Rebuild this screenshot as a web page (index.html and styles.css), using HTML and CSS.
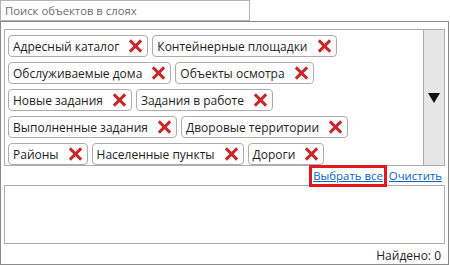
FILE: index.html
```html
<!DOCTYPE html>
<html lang="ru">
<head>
<meta charset="utf-8">
<link rel="stylesheet" href="styles.css">
</head>
<body>
<div class="search">Поиск объектов в слоях</div>
<div class="panel">
  <div class="tagbox">
    <div class="tags">
      <span class="tag">Адресный каталог<span class="x"></span></span>
      <span class="tag">Контейнерные площадки<span class="x"></span></span>
      <span class="tag">Обслуживаемые дома<span class="x"></span></span>
      <span class="tag">Объекты осмотра<span class="x"></span></span>
      <span class="tag">Новые задания<span class="x"></span></span>
      <span class="tag">Задания в работе<span class="x"></span></span>
      <span class="tag">Выполненные задания<span class="x"></span></span>
      <span class="tag">Дворовые территории<span class="x"></span></span>
      <span class="tag">Районы<span class="x"></span></span>
      <span class="tag">Населенные пункты<span class="x"></span></span>
      <span class="tag">Дороги<span class="x"></span></span>
    </div>
    <div class="scroll"><span class="arrow"></span></div>
  </div>
  <div class="links">
    <a class="link marked" href="#">Выбрать все</a><a class="link" href="#">Очистить</a>
  </div>
  <div class="results"></div>
  <div class="found">Найдено: 0</div>
</div>
</body>
</html>
```
FILE: styles.css
```css
* { box-sizing: border-box; }
body {
  margin: 0;
  background: #fff;
  font-family: "Open Sans", "Noto Sans", sans-serif;
  font-size: 12px;
  color: #1e1e1e;
}
.search {
  width: 250px;
  height: 21px;
  border: 1px solid #b4b4b4;
  color: #6d6d6d;
  padding: 1px 4px;
  line-height: 17px;
  font-size: 11.3px;
}
.panel {
  width: 449px;
  height: 244px;
  border: 1px solid #8a8a8a;
  padding: 7px 3px 0 3px;
}
.tagbox {
  display: flex;
  height: 137px;
  border: 1px solid #acacac;
}
.tags {
  flex: 1;
  display: flex;
  flex-wrap: wrap;
  align-content: flex-start;
  gap: 5px 4px;
  padding: 5px 3px 4px;
}
.tag {
  display: inline-flex;
  align-items: center;
  height: 22px;
  border: 1px solid #acacac;
  border-radius: 4px;
  padding: 0 5px 0 4px;
  white-space: nowrap;
  font-size: 12px;
}
.x {
  position: relative;
  width: 13px;
  height: 13px;
  margin-left: 10px;
}
.x::before, .x::after {
  content: "";
  position: absolute;
  left: 5px;
  top: -1.5px;
  width: 3px;
  height: 16px;
  background: #c8282b;
  transform: rotate(45deg);
}
.x::after { transform: rotate(-45deg); }
.scroll {
  width: 21px;
  background: #e6e6e6;
  border-left: 1px solid #acacac;
  display: flex;
  align-items: center;
  justify-content: center;
}
.arrow {
  width: 0;
  height: 0;
  border-left: 6px solid transparent;
  border-right: 6px solid transparent;
  border-top: 10px solid #111;
  margin-left: -1px;
}
.links {
  display: flex;
  justify-content: flex-end;
  align-items: center;
  height: 19px;
  padding-right: 3px;
  padding-top: 1px;
}
.link {
  color: #0a64c8;
  text-decoration: underline;
  font-size: 11.4px;
  line-height: 14px;
}
.link + .link { margin-left: 6px; }
.marked {
  outline: 3px solid #e3181e;
  outline-offset: 1px;
}
.results {
  height: 59px;
  border: 1px solid #acacac;
}
.found {
  text-align: right;
  padding-right: 4px;
  margin-top: 4px;
  line-height: 16px;
}
```
